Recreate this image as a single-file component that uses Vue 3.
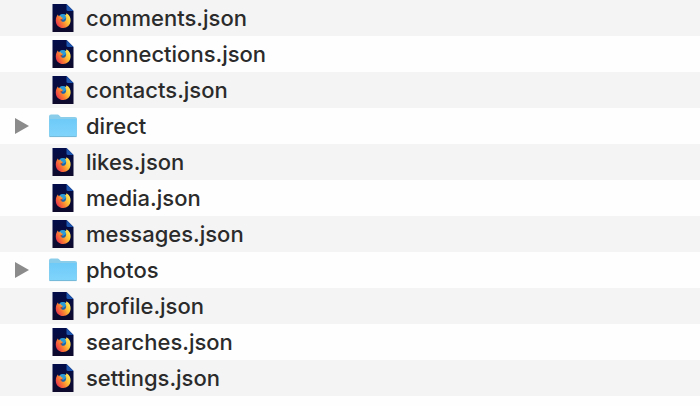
<script setup>
import { ref } from 'vue'

const entries = ref([
  { name: 'comments.json', type: 'file' },
  { name: 'connections.json', type: 'file' },
  { name: 'contacts.json', type: 'file' },
  { name: 'direct', type: 'folder', open: false },
  { name: 'likes.json', type: 'file' },
  { name: 'media.json', type: 'file' },
  { name: 'messages.json', type: 'file' },
  { name: 'photos', type: 'folder', open: false },
  { name: 'profile.json', type: 'file' },
  { name: 'searches.json', type: 'file' },
  { name: 'settings.json', type: 'file' }
])

function toggle(entry) {
  entry.open = !entry.open
}
</script>

<template>
  <!-- Gradients shared by every row icon -->
  <svg class="defs" width="0" height="0" aria-hidden="true">
    <defs>
      <linearGradient id="page" x1="0" y1="0" x2="0" y2="1">
        <stop offset="0" stop-color="#030d4a" />
        <stop offset="1" stop-color="#0e0a2c" />
      </linearGradient>
      <linearGradient id="fox" x1="0.95" y1="0.2" x2="0.05" y2="0.75">
        <stop offset="0" stop-color="#ffe95a" />
        <stop offset="0.35" stop-color="#ffbf35" />
        <stop offset="0.65" stop-color="#fb7a33" />
        <stop offset="1" stop-color="#e8374a" />
      </linearGradient>
      <linearGradient id="folder" x1="0" y1="0" x2="0" y2="1">
        <stop offset="0" stop-color="#6ecaf8" />
        <stop offset="1" stop-color="#7fd4fb" />
      </linearGradient>
    </defs>
  </svg>

  <ul class="file-list">
    <li v-for="entry in entries" :key="entry.name" class="row">
      <button
        v-if="entry.type === 'folder'"
        class="disclosure"
        :class="{ open: entry.open }"
        :aria-label="entry.name"
        :aria-expanded="entry.open"
        @click="toggle(entry)"
      >
        <svg width="14" height="16" viewBox="0 0 14 16">
          <path d="M0 0L14 8L0 16Z" fill="#8b8b8b" />
        </svg>
      </button>
      <span v-else class="disclosure"></span>

      <span class="icon">
        <svg v-if="entry.type === 'folder'" width="28" height="24" viewBox="0 0 28 24">
          <path d="M0 2.500Q0 0.500 2 0.500H8.500Q9.500 0.500 10.300 1.500L11.800 3H26Q28 3 28 4.700V21.500Q28 23 26.500 23H1.500Q0 23 0 21.500Z" fill="#8acdea" />
          <path d="M0.500 5H27.500V21Q27.500 22.200 26.300 22.200H1.700Q0.500 22.200 0.500 21Z" fill="url(#folder)" />
          <path d="M0.500 22.600H27.500" stroke="#6fb2d0" stroke-width="0.800" />
        </svg>
        <svg v-else width="22" height="28" viewBox="0 0 22 28">
          <path d="M0.500 0H14.500L21.500 7V28H0.500Z" fill="url(#page)" />
          <path d="M14.500 0L21.500 7H16Q14.500 7 14.500 5.500Z" fill="#1c55ad" />
          <circle cx="11" cy="15.700" r="5.800" fill="#1f62a8" />
          <path d="M8 11Q10.500 9 13.200 10.600L14.200 14L11 16L8 14Z" fill="#2d9bd6" />
          <path
            d="M14.300 9.300C17.300 10.800 18.800 13.500 18.600 16.800C18.300 21 15.200 24 11.200 24C6.900 24 3.800 20.900 3.800 16.700C3.800 14.300 4.500 12.200 5.900 10.600L6.700 12.200L8.600 12.100C8.900 13.200 9.700 13.800 11.400 14L9.900 15.200C9 15.600 8.900 16.600 9.600 17.200C10.700 18.200 12.700 17.900 13.600 16.400C14.600 14.700 14.300 12.900 12.900 11.600C13.800 11.500 14.400 10.600 14.300 9.300Z"
            fill="url(#fox)"
          />
          <path d="M8.300 15.300L11.300 14.200L10 15.400Q8.800 16.300 9.600 17.300Q8.400 16.700 8.300 15.300Z" fill="#b5402f" />
        </svg>
      </span>

      <span class="name">{{ entry.name }}</span>
    </li>
  </ul>
</template>

<style>
body {
  margin: 0;
  background: #fefefe;
}
</style>

<style scoped>
.defs {
  position: absolute;
}

.file-list {
  margin: 0;
  padding: 0;
  list-style: none;
  font-family: Inter, "Liberation Sans", sans-serif;
  font-size: 22px;
  font-weight: 500;
  line-height: 36px;
  color: #2b2b2b;
}

.row {
  display: flex;
  align-items: center;
  height: 36px;
  padding-left: 15px;
}

.row:nth-child(odd) {
  background: #f4f4f4;
}

.disclosure {
  display: flex;
  align-items: center;
  flex: none;
  width: 14px;
  height: 16px;
  margin-right: 20px;
  padding: 0;
  border: 0;
  background: none;
  cursor: pointer;
}

.disclosure.open svg {
  transform: rotate(90deg);
}

.icon {
  display: flex;
  justify-content: center;
  flex: none;
  width: 28px;
  margin-right: 9px;
}

.name {
  white-space: nowrap;
}
</style>
